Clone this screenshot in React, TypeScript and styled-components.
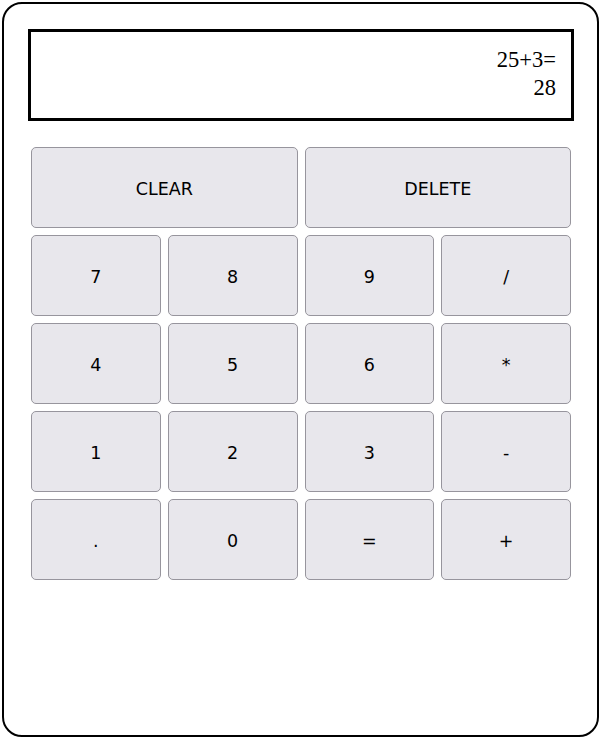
import React, { useState } from "react";
import styled, { createGlobalStyle } from "styled-components";

const Global = createGlobalStyle`
  html, body { margin: 0; padding: 0; background: #fff; }
  * { box-sizing: border-box; }
`;

const Frame = styled.div`
  margin: 2px 1px 0 2px;
  height: 735px;
  border: 2px solid #000;
  border-radius: 20px;
  padding: 25px 23px 0 24px;
  display: flex;
  flex-direction: column;
  gap: 26px;
`;

const Display = styled.div`
  height: 92px;
  border: 3px solid #000;
  padding: 14px 15px 0 0;
  font-family: "Liberation Serif", "Times New Roman", serif;
  font-size: 22.5px;
  line-height: 28px;
  text-align: right;
  color: #000;
`;

const Keys = styled.div`
  margin: 0 3px;
  display: grid;
  grid-template-columns: repeat(4, 1fr);
  grid-auto-rows: 81px;
  gap: 7px;
`;

const Key = styled.button<{ $span?: number }>`
  grid-column: span ${(p) => p.$span ?? 1};
  background: #e8e7ec;
  border: 1px solid #97959d;
  border-radius: 5px;
  font-family: "DejaVu Sans", Verdana, sans-serif;
  font-size: 17.5px;
  color: #000;
  cursor: pointer;
  padding: 2px 0 0 0;
`;

const rows = [
  ["7", "8", "9", "/"],
  ["4", "5", "6", "*"],
  ["1", "2", "3", "-"],
  [".", "0", "=", "+"],
];

export default function App() {
  const [expr] = useState("25+3=");
  const [result] = useState("28");
  return (
    <>
      <Global />
      <Frame>
        <Display>
          <div>{expr}</div>
          <div>{result}</div>
        </Display>
        <Keys>
          <Key $span={2}>CLEAR</Key>
          <Key $span={2}>DELETE</Key>
          {rows.flat().map((k) => (
            <Key key={k}>{k}</Key>
          ))}
        </Keys>
      </Frame>
    </>
  );
}
